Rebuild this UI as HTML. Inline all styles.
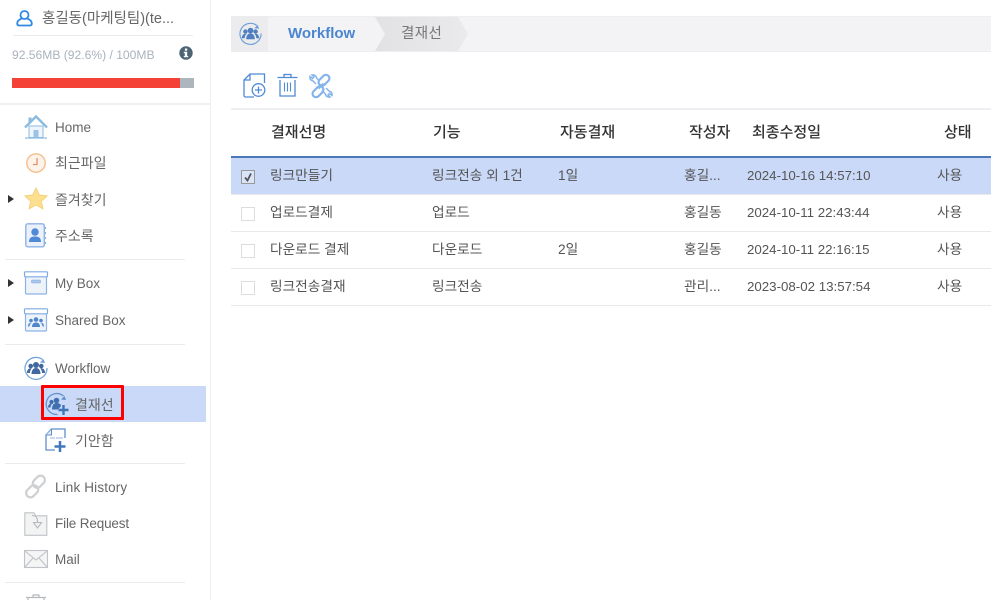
<!DOCTYPE html>
<html lang="ko"><head><meta charset="utf-8"><title>Workflow</title>
<style>
html,body{margin:0;padding:0;width:991px;height:600px;overflow:hidden;background:#fff}
body{position:relative;font-family:"Liberation Sans","Noto Sans CJK KR",sans-serif;font-size:13px;color:#555}
.a{position:absolute}
.t{position:absolute;white-space:nowrap;line-height:20px;height:20px}
.n{color:#666;font-size:13.5px}
.k{color:#666;font-size:14px}
.h{color:#333;font-size:15px;font-weight:500}
.c{color:#555;font-size:13.7px}
.d{color:#555;font-size:13.3px}
.l{position:absolute;background:#e9ebee;height:1px}
.r{position:absolute;left:231px;width:760px;height:1px;background:#e9e9e9}
.cb{position:absolute;left:241px;width:12px;height:12px;border:1px solid #ddd;background:#fff}
.tri{position:absolute;left:8px;width:0;height:0;border-left:6px solid #333;border-top:4px solid transparent;border-bottom:4px solid transparent}
svg{position:absolute;overflow:visible}
</style></head><body>

<!-- sidebar -->
<div class="a" style="left:210px;top:0;width:1px;height:600px;background:#eeeef3"></div>
<svg style="left:16px;top:9px" width="18" height="18" viewBox="0 0 18 18" fill="none" stroke="#2f8ae6" stroke-width="1.800"><circle cx="8.500" cy="6" r="4"/><path d="M6 9.500C3 10.500 1.200 12 1.200 14.500c0 1.500.8 2 2 2h10.600c1.200 0 2-.5 2-2 0-2.500-1.800-4-4.800-5"/></svg>
<div class="t" style="left:42px;top:9px;font-size:14.500px;color:#666">홍길동(마케팅팀)(te...</div>
<div class="a" style="left:13px;top:35px;width:180px;height:1px;background:#e9ebee"></div>
<div class="t" style="left:12px;top:45px;font-size:12.100px;color:#a9b2bd">92.56MB (92.6%) / 100MB</div>
<svg style="left:179px;top:46px" width="14" height="14" viewBox="0 0 14 14"><circle cx="7" cy="7" r="6.700" fill="#4d6475"/><rect x="5.900" y="2.500" width="2.300" height="2.200" fill="#fff"/><path d="M4.800 5.800h3.400v4.200h1v1.300H4.800V10h1V7.100h-1z" fill="#fff"/></svg>
<div class="a" style="left:12px;top:78px;width:168px;height:10px;background:#f44336"></div>
<div class="a" style="left:180px;top:78px;width:14px;height:10px;background:#adb6bf"></div>
<div class="a" style="left:0;top:103px;width:210px;height:2px;background:#eeeef3"></div>

<svg style="left:24px;top:115px" width="24" height="24" viewBox="0 0 24 24"><path d="M5 11h14v11.500H5z" fill="#eef5fc" stroke="#8dbbe0"/><path d="M9.500 15h5v7.500h-5z" fill="#9cc3e6"/><path d="M1 12.500 12 1.500l11 11" fill="none" stroke="#8dbbe0" stroke-width="2.400"/><path d="M4.500 2.500h3v3l-3 3z" fill="#8dbbe0"/><path d="M1 23h22" stroke="#8dbbe0" stroke-width="1.200"/></svg>
<div class="t n" style="left:55px;top:118px">Home</div>
<svg style="left:26px;top:153px" width="20" height="20" viewBox="0 0 20 20" fill="none"><circle cx="10" cy="10" r="9.200" fill="#fdf3e8" stroke="#f3bf8c" stroke-width="1.400"/><path d="M11 5v6.500H7" stroke="#e98b6e" stroke-width="1.300"/></svg>
<div class="t k" style="left:55px;top:153px">최근파일</div>
<div class="tri" style="top:195px"></div>
<svg style="left:24px;top:187px" width="24" height="23" viewBox="0 0 24 23"><path d="M12 1l3.300 7 8 .9-6 5.300 1.700 7.800-7-4-7 4 1.700-7.800-6-5.300 8-.9z" fill="#fde08f" stroke="#f4d27e" stroke-linejoin="round"/></svg>
<div class="t k" style="left:55px;top:190px">즐겨찾기</div>
<svg style="left:25px;top:223px" width="22" height="25" viewBox="0 0 22 25"><rect x=".8" y=".8" width="18.500" height="23" rx="2" fill="#eaf1fb" stroke="#8db3e6" stroke-width="1.400"/><path d="M20.500 4v2M20.500 9v2M20.500 14v2M20.500 19v2" stroke="#8db3e6" stroke-width="1.200"/><circle cx="10" cy="9" r="3.700" fill="#4f8ad6"/><path d="M4 19c0-4.500 2.500-5.500 6-5.500s6 1 6 5.500z" fill="#4f8ad6"/></svg>
<div class="t k" style="left:55px;top:226px">주소록</div>
<div class="l" style="left:5px;top:259px;width:180px"></div>

<div class="tri" style="top:279px"></div>
<svg style="left:24px;top:271px" width="24" height="24" viewBox="0 0 24 24"><rect x="1.500" y="5.500" width="21" height="17.500" rx="1" fill="#eef3fa" stroke="#8db3e6" stroke-width="1.200"/><rect x=".5" y=".8" width="23" height="5" rx="1" fill="#fff" stroke="#7faae0" stroke-width="1.200"/><rect x="7.500" y="9" width="9" height="3" rx="1" fill="#a9c6ea" stroke="#7faae0" stroke-width=".6"/></svg>
<div class="t n" style="left:55px;top:274px">My Box</div>
<div class="tri" style="top:316px"></div>
<svg style="left:24px;top:308px" width="24" height="24" viewBox="0 0 24 24"><rect x="1.500" y="5.500" width="21" height="17.500" rx="1" fill="#eef3fa" stroke="#8db3e6" stroke-width="1.200"/><rect x=".5" y=".8" width="23" height="5" rx="1" fill="#fff" stroke="#7faae0" stroke-width="1.200"/><g fill="#4f86cc"><circle cx="12" cy="11.500" r="2.300"/><circle cx="7" cy="12.500" r="1.800"/><circle cx="17" cy="12.500" r="1.800"/><path d="M8 19c0-3 1.500-4.500 4-4.500s4 1.500 4 4.500zM5.500 18.500H4c0-2 .8-3.800 3-3.800l.6.200c-1.300.8-2.100 2-2.100 3.600zM18.500 18.500H20c0-2-.8-3.800-3-3.800l-.6.200c1.300.8 2.100 2 2.100 3.600z"/></g></svg>
<div class="t n" style="left:55px;top:311px">Shared Box</div>
<div class="l" style="left:5px;top:344px;width:180px"></div>

<svg style="left:24px;top:356px" width="24" height="24" viewBox="0 0 24 24" fill="none"><path d="M18.500 3.500A11 11 0 1 0 23 12" stroke="#6d9fd8" stroke-width="1.200"/><path d="M21 7l-5-.5 3.500-3.500z" fill="#6d9fd8"/><g fill="#41689f"><circle cx="12" cy="9" r="3"/><circle cx="6.700" cy="10" r="2.300"/><circle cx="17.300" cy="10" r="2.300"/><path d="M7.500 18c0-3.500 1.500-6 4.500-6s4.500 2.500 4.500 6zM3 17c0-2.800 1.200-4.800 3.700-4.800l1.200.3C6.600 13.500 6 15 5.900 17zM21 17c0-2.800-1.200-4.800-3.700-4.800l-1.200.3c1.300 1 1.900 2.500 2 4.500z"/></g></svg>
<div class="t n" style="left:55px;top:359px">Workflow</div>
<div class="a" style="left:0;top:386px;width:206px;height:36px;background:#c9d9f7"></div>
<div class="a" style="left:41px;top:385px;width:77px;height:29px;border:3px solid #f00;border-radius:1px"></div>
<svg style="left:45px;top:392px" width="24" height="24" viewBox="0 0 24 24" fill="none"><path d="M18.500 4A10.500 10.500 0 1 0 12.500 22.500" stroke="#5f8fcc" stroke-width="1.200"/><path d="M21 8l-5-.5 3.500-3.500z" fill="#5f8fcc"/><g fill="#3f6fae"><circle cx="11.500" cy="8.500" r="2.800"/><circle cx="6.500" cy="10" r="2.100"/><path d="M7 17.500c0-4 1.500-6.500 4.500-6.500s4.500 1.500 4.500 3l-3 3.500zM3 15.500c0-2.200 1-3.800 3.300-3.800l.7.200c-1 1-1.400 2.200-1.500 3.600z"/></g><path d="M18.500 13v10M13.500 18h10" stroke="#3f74b8" stroke-width="2.400"/></svg>
<div class="t k" style="left:75px;top:395px">결재선</div>
<svg style="left:45px;top:428px" width="22" height="24" viewBox="0 0 22 24" fill="none"><path d="M20 10V1H6.500L1 7v15h9" stroke="#5f8fcc" stroke-width="1.300"/><path d="M6.500 1.500V7H1" stroke="#5f8fcc" fill="#e3ecf8"/><path d="M5 10h5M11 10h7" stroke="#a8c3e6" stroke-width="1.200"/><path d="M15 13v11M9.500 18.500h11" stroke="#4178bc" stroke-width="2.500"/></svg>
<div class="t k" style="left:75px;top:431px">기안함</div>
<div class="l" style="left:5px;top:463px;width:180px"></div>

<svg style="left:24px;top:475px" width="23" height="23" viewBox="0 0 24 24" fill="none" stroke="#cfd1d3" stroke-width="2.400"><rect x="11" y="0" width="9" height="14" rx="4.500" transform="rotate(45 15.500 7)"/><rect x="4" y="10" width="9" height="14" rx="4.500" transform="rotate(45 8.500 17)"/></svg>
<div class="t n" style="left:55px;top:478px;letter-spacing:.15px">Link History</div>
<svg style="left:24px;top:512px" width="24" height="24" viewBox="0 0 24 24" fill="none"><path d="M.8.800h9l2 3h11v19.500H.8z" fill="#f3f3f4" stroke="#bfc3c7" stroke-width="1.100"/><path d="M8 3.500c5 0 5.500 3 5.500 7M9.500 10.500h8L13.500 16z" stroke="#b5b9bd" stroke-width="1.100"/></svg>
<div class="t n" style="left:55px;top:514px;letter-spacing:-.15px">File Request</div>
<svg style="left:24px;top:550px" width="24" height="18" viewBox="0 0 24 18" fill="none" stroke="#bfc3c7" stroke-width="1.100"><rect x=".5" y=".5" width="23" height="17" fill="#f5f5f6"/><path d="M1 1l11 9 11-9M1 17l8-9M23 17l-8-9"/></svg>
<div class="t n" style="left:55px;top:550px">Mail</div>
<div class="l" style="left:5px;top:582px;width:180px"></div>
<svg style="left:26px;top:594px" width="20" height="10" viewBox="0 0 20 10" fill="none" stroke="#b5b9bd" stroke-width="1.200"><path d="M7 3V1h6v2M0 3.500h20M2 4v8h16V4"/></svg>

<!-- breadcrumb -->
<div class="a" style="left:231px;top:16px;width:760px;height:36px;background:#f3f3f6;box-shadow:inset 0 1px 0 #eeeeef,inset 0 -1px 0 #eeeeef"></div>
<div class="a" style="left:231px;top:16px;width:37px;height:36px;background:#ececee"></div>
<svg style="left:239px;top:22px" width="23" height="23" viewBox="0 0 24 24" fill="none"><path d="M18.500 3.500A11 11 0 1 0 23 12" stroke="#6d9fd8" stroke-width="1.200"/><path d="M21 7l-5-.5 3.500-3.500z" fill="#6d9fd8"/><g fill="#4f7fc0"><circle cx="12" cy="9" r="3"/><circle cx="6.700" cy="10" r="2.300"/><circle cx="17.300" cy="10" r="2.300"/><path d="M7.500 18c0-3.500 1.500-6 4.500-6s4.500 2.500 4.500 6zM3 17c0-2.800 1.200-4.800 3.700-4.800l1.200.3C6.600 13.500 6 15 5.900 17zM21 17c0-2.800-1.200-4.800-3.700-4.800l-1.200.3c1.300 1 1.900 2.500 2 4.500z"/></g></svg>
<div class="t" style="left:288px;top:24px;font-size:15px;font-weight:bold;color:#4a86cf">Workflow</div>
<svg style="left:375px;top:17px" width="94" height="34" viewBox="0 0 94 34"><defs><linearGradient id="g" x1="0" x2="1"><stop offset="0" stop-color="#e2e2e4"/><stop offset="1" stop-color="#eaeaec"/></linearGradient></defs><path d="M0 0H83L93 17 83 34H0L10 17z" fill="url(#g)"/></svg>
<div class="t" style="left:401px;top:24px;font-size:14.500px;color:#777;letter-spacing:.4px">결재선</div>

<!-- toolbar -->
<svg style="left:243px;top:73px" width="23" height="25" viewBox="0 0 23 25" fill="none" stroke="#4f8ad6" stroke-width="1.300"><path d="M21.500 10V1H7L1 7v15.500a1.500 1.500 0 0 0 1.500 1.500H11"/><path d="M7 1v6H1"/><circle cx="15.500" cy="17" r="6.300" fill="#fff"/><path d="M15.500 13.500v7M12 17h7"/></svg>
<svg style="left:277px;top:73px" width="21" height="24" viewBox="0 0 21 24" fill="none" stroke="#4f8ad6" stroke-width="1.300"><path d="M.5 4.500h20M7 4V1.500h7V4"/><path d="M3 7v16h15V7"/><path d="M7.500 9.500v9M10.500 9.500v9M13.500 9.500v9" stroke-width="1.100"/></svg>
<svg style="left:309px;top:74px" width="24" height="24" viewBox="0 0 24 24" fill="none" stroke="#85b4ea"><path d="M7 10 3.500 6.500C1.500 6.500.5 4.500 1 2.500L3.500 4.500 5 3 3 1C5.500.5 7.500 2 7.500 4L11 7.500" stroke-width="1.500"/><path d="M7 10 3.500 6.500C1.500 6.500.5 4.500 1 2.500L3.500 4.500 5 3 3 1C5.500.5 7.500 2 7.500 4L11 7.500" stroke-width="1.500" transform="rotate(180 12 12)"/><rect x="11.500" y="0" width="7" height="12.500" rx="3.500" transform="rotate(45 15 6.250)" stroke-width="2.200" fill="#fff"/><rect x="5.500" y="11.500" width="7" height="12.500" rx="3.500" transform="rotate(45 9 17.750)" stroke-width="2.200"/><path d="M9.500 14.500l5-5" stroke-width="2.200"/></svg>
<div class="a" style="left:231px;top:108px;width:760px;height:2px;background:#eeeef3"></div>

<!-- table header -->
<div class="t h" style="left:271px;top:123px">결재선명</div>
<div class="t h" style="left:433px;top:123px">기능</div>
<div class="t h" style="left:560px;top:123px">자동결재</div>
<div class="t h" style="left:689px;top:123px">작성자</div>
<div class="t h" style="left:752px;top:123px">최종수정일</div>
<div class="t h" style="left:944px;top:123px">상태</div>
<div class="a" style="left:231px;top:156px;width:760px;height:2px;background:#4a78b8"></div>
<div class="a" style="left:231px;top:158px;width:760px;height:36px;background:#c9d9f7"></div>

<!-- rows -->
<div class="r" style="top:194px"></div>
<div class="r" style="top:231px"></div>
<div class="r" style="top:268px"></div>
<div class="r" style="top:305px"></div>

<div class="cb" style="top:170px;border-color:#999;background:#dbe5f9"></div>
<svg style="left:243px;top:172px" width="11" height="11" viewBox="0 0 11 11" fill="none" stroke="#555" stroke-width="1.800"><path d="M2 5.500l2.500 3 3.500-7"/></svg>
<div class="t c" style="left:270px;top:166px">링크만들기</div>
<div class="t c" style="left:432px;top:166px">링크전송 외 1건</div>
<div class="t c" style="left:558px;top:166px">1일</div>
<div class="t c" style="left:684px;top:166px">홍길...</div>
<div class="t d" style="left:747px;top:166px">2024-10-16 14:57:10</div>
<div class="t c" style="left:937px;top:166px">사용</div>

<div class="cb" style="top:207px"></div>
<div class="t c" style="left:270px;top:203px">업로드결제</div>
<div class="t c" style="left:432px;top:203px">업로드</div>
<div class="t c" style="left:684px;top:203px">홍길동</div>
<div class="t d" style="left:747px;top:203px">2024-10-11 22:43:44</div>
<div class="t c" style="left:937px;top:203px">사용</div>

<div class="cb" style="top:244px"></div>
<div class="t c" style="left:270px;top:240px">다운로드 결제</div>
<div class="t c" style="left:432px;top:240px">다운로드</div>
<div class="t c" style="left:558px;top:240px">2일</div>
<div class="t c" style="left:684px;top:240px">홍길동</div>
<div class="t d" style="left:747px;top:240px">2024-10-11 22:16:15</div>
<div class="t c" style="left:937px;top:240px">사용</div>

<div class="cb" style="top:281px"></div>
<div class="t c" style="left:270px;top:277px">링크전송결재</div>
<div class="t c" style="left:432px;top:277px">링크전송</div>
<div class="t c" style="left:684px;top:277px">관리...</div>
<div class="t d" style="left:747px;top:277px">2023-08-02 13:57:54</div>
<div class="t c" style="left:937px;top:277px">사용</div>
</body></html>
